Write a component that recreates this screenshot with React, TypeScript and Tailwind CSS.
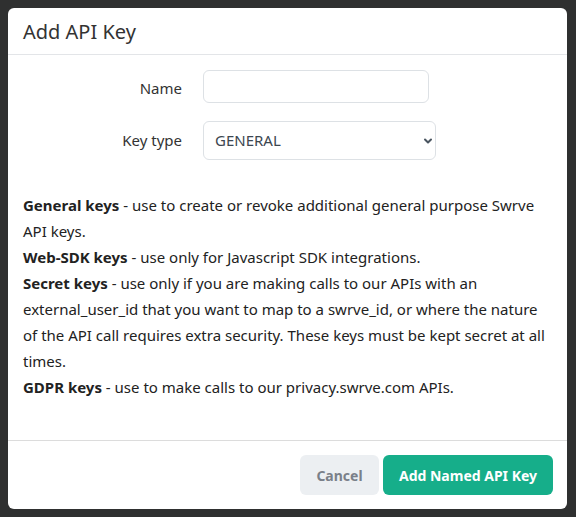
import { ChevronDown } from "lucide-react";

const keyTypes = [
  { title: "General keys", text: " - use to create or revoke additional general purpose Swrve API keys." },
  { title: "Web-SDK keys", text: " - use only for Javascript SDK integrations." },
  {
    title: "Secret keys",
    text: " - use only if you are making calls to our APIs with an external_user_id that you want to map to a swrve_id, or where the nature of the API call requires extra security. These keys must be kept secret at all times.",
  },
  { title: "GDPR keys", text: " - use to make calls to our privacy.swrve.com APIs." },
];

const App = () => {
  return (
    <div className="relative w-[576px] h-[517px] overflow-hidden bg-[#2f3030] font-['Noto_Sans',sans-serif]">
      {/* dialog */}
      <div className="absolute left-[8px] top-[8px] w-[559px] h-[501px] bg-white rounded-[6px] flex flex-col">
        <div className="h-[47px] border-b border-[#e3e5e8] px-[15px] flex items-center">
          <h2 className="text-[20px] text-[#333] leading-none pt-[1px]">Add API Key</h2>
        </div>

        <div className="flex-1 px-[15px] pt-[15px]">
          <div className="flex items-center">
            <label className="w-[159px] text-right text-[15px] text-[#333] pt-[3px]">Name</label>
            <input
              type="text"
              className="ml-[21px] w-[226px] h-[33px] border border-[#dde1e5] rounded-[6px] px-[10px] text-[15px] outline-none"
            />
          </div>
          <div className="flex items-center mt-[18px]">
            <label className="w-[159px] text-right text-[15px] text-[#333]">Key type</label>
            <div className="relative ml-[21px]">
              <select className="appearance-none w-[233px] h-[39px] border border-[#dde1e5] rounded-[6px] pl-[11px] text-[15px] text-[#3c4650] bg-white outline-none">
                <option>GENERAL</option>
                <option>WEB-SDK</option>
                <option>SECRET</option>
                <option>GDPR</option>
              </select>
              <ChevronDown
                className="absolute right-[2px] top-[14px] w-[12px] h-[12px] text-[#4a5560] pointer-events-none"
                strokeWidth={4}
              />
            </div>
          </div>

          <div className="mt-[32px] text-[15px] leading-[26px] text-[#222]">
            {keyTypes.map((k) => (
              <p key={k.title}>
                <span className="font-bold">{k.title}</span>
                {k.text}
              </p>
            ))}
          </div>
        </div>

        <div className="h-[69px] border-t border-[#dcdcdc] px-[14px] flex items-center justify-end gap-[4px]">
          <button className="h-[40px] w-[79px] rounded-[6px] bg-[#eceff2] text-[#7a8089] text-[14px] font-bold">
            Cancel
          </button>
          <button className="h-[40px] w-[170px] rounded-[6px] bg-[#16ae8a] text-white text-[14px] font-bold">
            Add Named API Key
          </button>
        </div>
      </div>
    </div>
  );
};

export default App;
